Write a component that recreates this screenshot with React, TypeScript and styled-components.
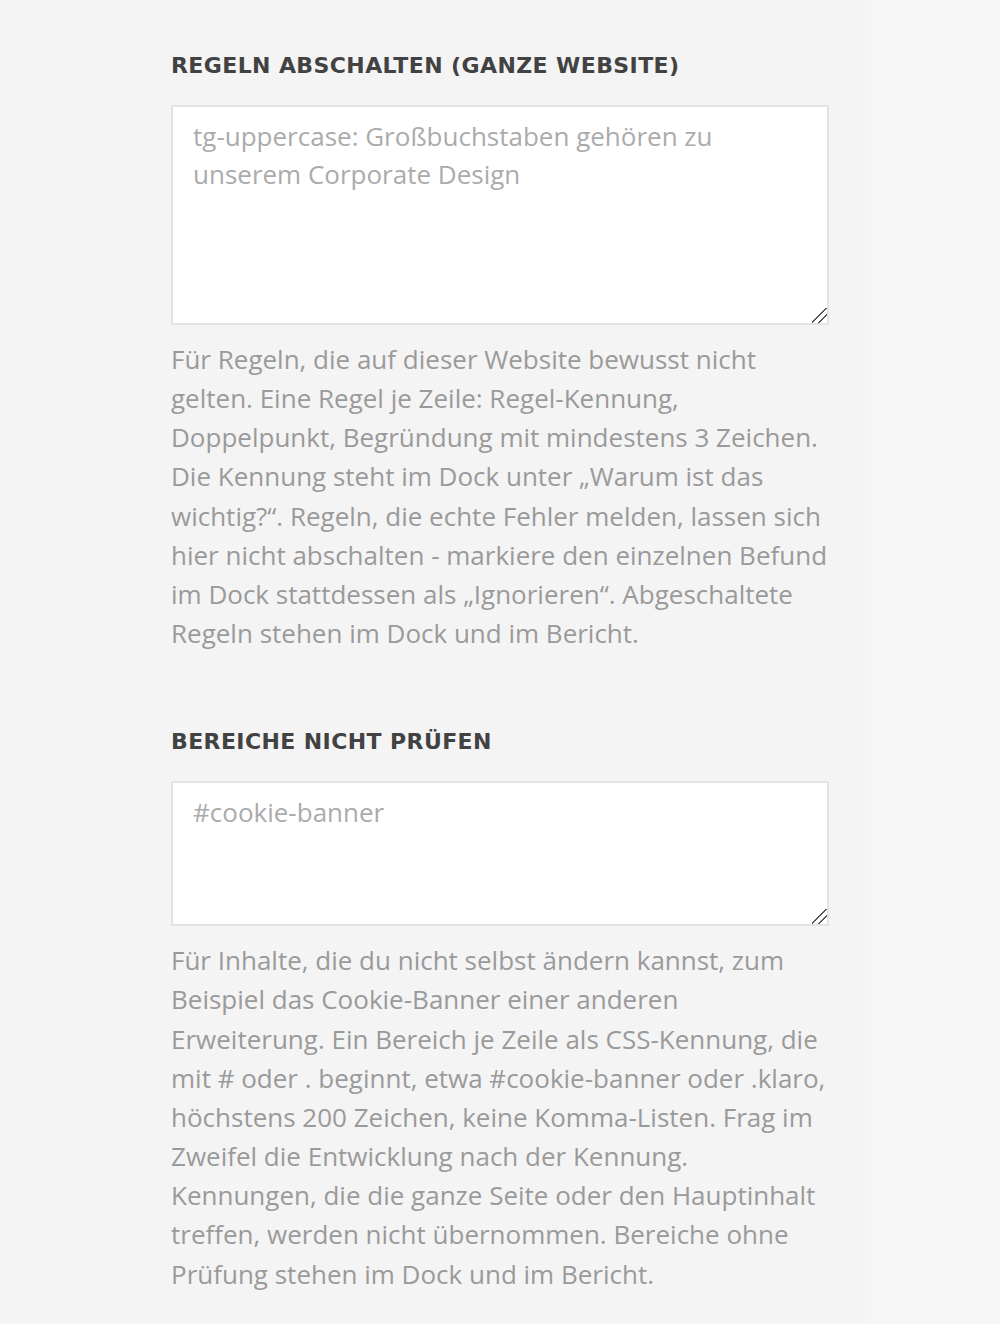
import React from "react";
import styled, { createGlobalStyle } from "styled-components";

const GlobalStyle = createGlobalStyle`
  html, body {
    margin: 0;
    padding: 0;
    background: #f6f6f6;
  }
`;

const Page = styled.div`
  width: 865px;
  min-height: 1324px;
  background: #f4f4f4;
  box-sizing: border-box;
  padding: 52px 36px 0 171px;
`;

const Section = styled.section`
  display: flex;
  flex-direction: column;
  margin-bottom: 75px;
`;

const Heading = styled.h3`
  margin: 0 0 25px;
  font-family: "DejaVu Sans", sans-serif;
  font-weight: 600;
  font-size: 22px;
  line-height: 28px;
  letter-spacing: 0.4px;
  color: #424242;
  text-transform: uppercase;
`;

const Field = styled.textarea<{ $tall?: boolean }>`
  display: block;
  width: 658px;
  height: ${({ $tall }) => ($tall ? 220 : 145)}px;
  box-sizing: border-box;
  margin: 0;
  padding: 10px 20px;
  border: 2px solid #e3e3e3;
  border-radius: 0;
  background: #fff;
  font-family: "Open Sans", sans-serif;
  font-size: 26px;
  line-height: 38px;
  color: #555;
  resize: vertical;
  outline: none;

  &::placeholder {
    color: #ababab;
  }

  &::-webkit-resizer {
    background: linear-gradient(
      135deg,
      transparent 0 44%,
      #555 44% 52%,
      transparent 52% 68%,
      #555 68% 76%,
      transparent 76%
    );
  }
`;

const Help = styled.p`
  margin: 15px 0 0;
  width: 658px;
  font-family: "Open Sans", sans-serif;
  font-size: 26px;
  line-height: 39.15px;
  color: #9a9a9a;
`;

export default function App() {
  return (
    <>
      <GlobalStyle />
      <Page>
        <Section>
          <Heading>Regeln abschalten (ganze Website)</Heading>
          <Field
            $tall
            placeholder={"tg-uppercase: Großbuchstaben gehören zu unserem Corporate Design"}
          />
          <Help>
            Für Regeln, die auf dieser Website bewusst nicht gelten. Eine Regel je Zeile:
            Regel-Kennung, Doppelpunkt, Begründung mit mindestens 3 Zeichen. Die Kennung steht
            im Dock unter „Warum ist das wichtig?“. Regeln, die echte Fehler melden, lassen sich
            hier nicht abschalten - markiere den einzelnen Befund im Dock stattdessen als
            „Ignorieren“. Abgeschaltete Regeln stehen im Dock und im Bericht.
          </Help>
        </Section>
        <Section>
          <Heading>Bereiche nicht prüfen</Heading>
          <Field placeholder="#cookie-banner" />
          <Help>
            Für Inhalte, die du nicht selbst ändern kannst, zum Beispiel das Cookie-Banner einer
            anderen Erweiterung. Ein Bereich je Zeile als CSS-Kennung, die mit # oder . beginnt,
            etwa #cookie-banner oder .klaro, höchstens 200 Zeichen, keine Komma-Listen. Frag im
            Zweifel die Entwicklung nach der Kennung. Kennungen, die die ganze Seite oder den
            Hauptinhalt treffen, werden nicht übernommen. Bereiche ohne Prüfung stehen im Dock
            und im Bericht.
          </Help>
        </Section>
      </Page>
    </>
  );
}
